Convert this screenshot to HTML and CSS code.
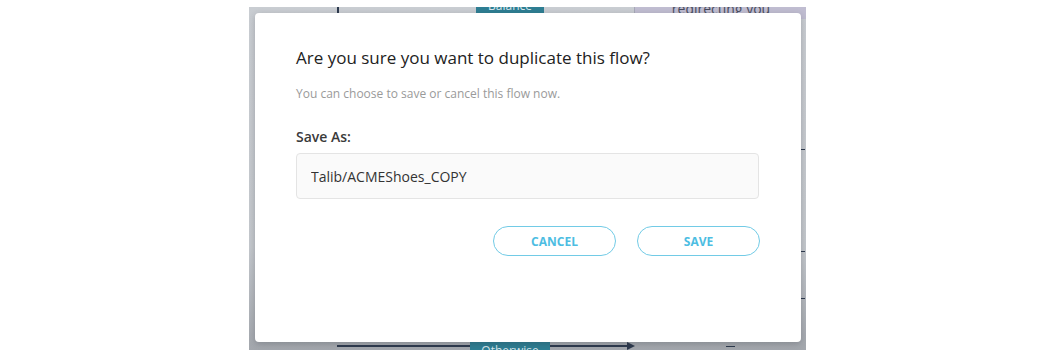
FILE: index.html
```html
<!DOCTYPE html>
<html lang="en">
<head>
    <meta charset="UTF-8">
    <meta name="viewport" content="width=device-width, initial-scale=1.0">
    <title>Duplicate flow</title>
    <link rel="stylesheet" href="styles.css">
</head>
<body>

<div class="canvas">
    <!-- flow diagram behind the overlay -->
    <div class="line line-v"></div>
    <div class="node node-top">Balance</div>
    <div class="node node-purple">redirecting you</div>
    <div class="line line-h"></div>
    <div class="arrow"></div>
    <div class="node node-bottom">Otherwise</div>
    <div class="tick tick-bottom"></div>
    <div class="tick tick-r1"></div>
    <div class="tick tick-r2"></div>
    <div class="tick tick-r3"></div>

    <div class="modal">
        <h2 class="modal-title">Are you sure you want to duplicate this flow?</h2>
        <p class="modal-sub">You can choose to save or cancel this flow now.</p>

        <label class="field-label" for="saveAs">Save As:</label>
        <input id="saveAs" class="field-input" type="text" value="Talib/ACMEShoes_COPY">

        <div class="actions">
            <button class="btn">CANCEL</button>
            <button class="btn">SAVE</button>
        </div>
    </div>
</div>

</body>
</html>
```

FILE: styles.css
```css
body {
    margin: 0;
    background: #fff;
    font-family: "Open Sans", "Noto Sans", Arial, sans-serif;
}
.canvas {
    position: relative;
    margin: 7px 0 0 249px;
    width: 557px;
    height: 343px;
    box-sizing: border-box;
    padding: 6px 5px 8px 6px;
    background: linear-gradient(180deg, #c9cdd2 0%, #c3c7cc 70%, #a3a7ad 100%);
    overflow: hidden;
}
.line {
    position: absolute;
    background: #2d3a4e;
}
.line-v {
    left: 88px;
    top: 0;
    width: 2px;
    height: 8px;
}
.line-h {
    left: 88px;
    top: 338px;
    width: 294px;
    height: 2px;
}
.arrow {
    position: absolute;
    left: 378px;
    top: 335px;
    width: 0;
    height: 0;
    border-top: 4px solid transparent;
    border-bottom: 4px solid transparent;
    border-left: 8px solid #2d3a4e;
}
.node {
    position: absolute;
    font-size: 12px;
    color: #d8e6ec;
    text-align: center;
}
.node-top {
    left: 227px;
    top: -9px;
    width: 68px;
    height: 15px;
    background: #2e7e93;
    line-height: 15px;
}
.node-bottom {
    left: 221px;
    top: 334px;
    width: 80px;
    height: 14px;
    background: #2e7e93;
    line-height: 20px;
}
.node-purple {
    left: 385px;
    top: -8px;
    width: 172px;
    height: 20px;
    background: #c0bdd1;
    color: #4a4d60;
    font-size: 14px;
    line-height: 20px;
    border-left: 1px solid #a7a9b8;
}
.tick {
    position: absolute;
    background: #2d3a4e;
}
.tick-bottom {
    left: 477px;
    top: 339px;
    width: 9px;
    height: 1px;
}
.tick-r1, .tick-r2, .tick-r3 {
    left: 551px;
    width: 5px;
    height: 1px;
}
.tick-r1 { top: 142px; }
.tick-r2 { top: 244px; }
.tick-r3 { top: 291px; }
.modal {
    position: relative;
    z-index: 1;
    height: 100%;
    box-sizing: border-box;
    background: #fff;
    border-radius: 4px;
    padding: 33px 42px 0 41px;
    box-shadow: 0 2px 6px rgba(40, 44, 52, 0.25);
}
.modal-title {
    margin: 0;
    font-size: 17px;
    font-weight: 400;
    color: #222;
    line-height: 24px;
}
.modal-sub {
    margin: 16px 0 0;
    font-size: 12px;
    color: #9a9a9a;
    line-height: 16px;
}
.field-label {
    display: block;
    margin-top: 26px;
    font-size: 14px;
    font-weight: 600;
    color: #3a3a3a;
    line-height: 18px;
}
.field-input {
    display: block;
    width: 100%;
    height: 46px;
    box-sizing: border-box;
    margin-top: 7px;
    padding: 0 14px;
    font-family: inherit;
    font-size: 14px;
    color: #333;
    background: #fafafa;
    border: 1px solid #e4e4e4;
    border-radius: 4px;
    outline: none;
}
.actions {
    display: flex;
    justify-content: flex-end;
    gap: 21px;
    margin: 27px -1px 0 0;
}
.btn {
    width: 123px;
    height: 30px;
    background: #fff;
    border: 1px solid #72cbe6;
    border-radius: 15px;
    font-family: inherit;
    font-size: 12px;
    font-weight: 700;
    color: #4dbde2;
    cursor: pointer;
}
```
